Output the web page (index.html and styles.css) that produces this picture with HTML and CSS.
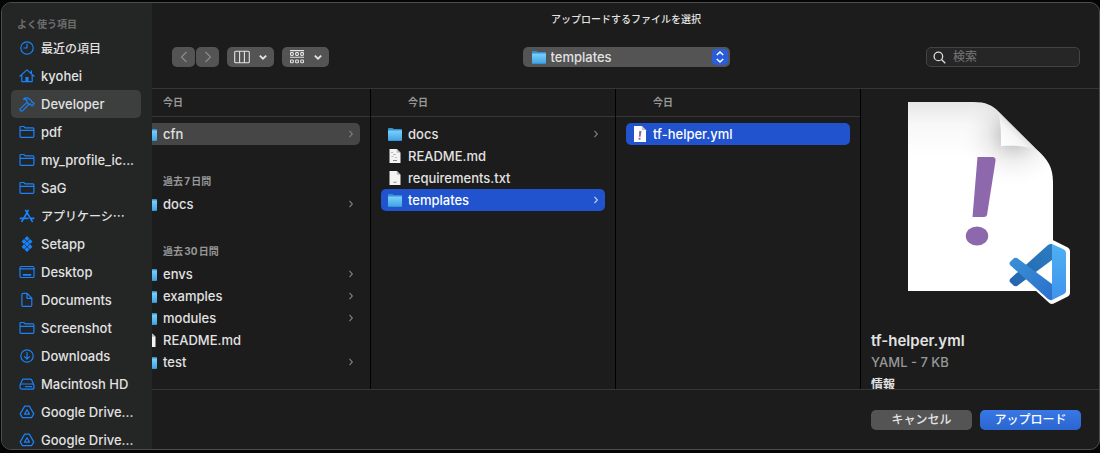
FILE: index.html
```html
<!DOCTYPE html>
<html lang="ja">
<head>
<meta charset="utf-8">
<meta name="viewport" content="width=device-width, initial-scale=1">
<title>アップロードするファイルを選択</title>
<link rel="stylesheet" href="styles.css">
</head>
<body>
<svg class="defs" width="0" height="0" aria-hidden="true">
  <defs>
    <linearGradient id="folderFill" x1="0" y1="0" x2="0" y2="1">
      <stop offset="0" stop-color="#7dcffb"/><stop offset="1" stop-color="#41a5e4"/>
    </linearGradient>
    <symbol id="i-clock" viewBox="0 0 16 16"><circle cx="8" cy="8" r="6.2"/><path d="M8 4.2V8H4.8"/></symbol>
    <symbol id="i-home" viewBox="0 0 16 16"><path d="M.9 8.2 8 1.9l7.1 6.3M2.8 6.8v6.8h10.4V6.8M12.4 5.4V2.8"/><path class="solid" d="M6.4 9h3.2v4.6H6.4z"/></symbol>
    <symbol id="i-hammer" viewBox="0 0 16 16"><path d="M1.3 12.6 8 6.4l1.9 2-6.4 6.4c-1.3 1-3.3-.9-2.2-2.2zM8 6.4c.5-1.500-.2-2.400-1.500-3-.8-.3-1.400-.3-2-.2C5.400 1.700 8.200 1.300 10 2.500l2.300 2.100c.4.4.3.9.5 1.300l.8.3 1.600 1.400-2.100 2.300-1.500-1.300-.2-.8-1.500.6z"/></symbol>
    <symbol id="i-folder" viewBox="0 0 16 16"><path d="M1 12.200V3.600c0-.7.4-1.100 1.100-1.100h2.700l1.300 1.300h7.700c.7 0 1.100.4 1.100 1.100v7.300c0 .7-.4 1.100-1.100 1.100H2.100c-.7 0-1.100-.4-1.100-1.100zM1 6.400h13.900"/></symbol>
    <symbol id="i-apps" viewBox="0 0 16 16"><path class="thick" d="M6.700 2.400 8 4.600l1.200-2.200M8.300 4.300 3.800 11.700M8 4.600l5.200 8.800M1.500 10.400h7.300M11.500 10.400h3.200M2.900 13.300l.5-.8"/></symbol>
    <symbol id="i-setapp" viewBox="0 0 16 16"><path class="solid" d="m8 0 2.500 2.500L8 5 5.500 2.500zM5 2.900l2.500 2.500L5 7.900 2.500 5.400zM11 2.900l2.500 2.500L11 7.900 8.500 5.400zM8 5.500 10.500 8 8 10.500 5.500 8zM5 8.200l2.500 2.500L5 13.200l-2.500-2.500zM11 8.200l2.500 2.500-2.500 2.500-2.500-2.500zM8 11l2.500 2.500L8 16l-2.500-2.500z"/></symbol>
    <symbol id="i-desktop" viewBox="0 0 16 16"><rect x="1" y="2.500" width="14" height="11" rx="1.300"/><path d="M1 4.800h14"/><path class="solid" d="M3.800 10h8.400v1.800H3.800z"/></symbol>
    <symbol id="i-doc" viewBox="0 0 16 16"><path d="M2.900 13.200V2.600c0-.8.4-1.200 1.200-1.200h4l4.700 4.800v7c0 .8-.4 1.200-1.200 1.200H4.100c-.8 0-1.200-.4-1.200-1.200zM8 1.600V6.300h4.600"/></symbol>
    <symbol id="i-down" viewBox="0 0 16 16"><circle cx="8" cy="8" r="6.200"/><path d="M8 4.600v6.400M5.500 8.700 8 11.200l2.500-2.500"/></symbol>
    <symbol id="i-disk" viewBox="0 0 16 16"><path d="m1.300 8.600 2-4.500c.3-.7.700-1 1.500-1h6.400c.8 0 1.200.3 1.500 1l2 4.500"/><rect x="1" y="8" width="14" height="5.200" rx="2"/><path d="M6.500 10.700h1M8.600 10.700h1M10.700 10.700h2"/></symbol>
    <symbol id="i-drive" viewBox="0 0 16 16"><path d="M5.700 2.100h4.600l4.500 7.800-2.200 3.700H3.400L1.200 9.900zM8 5.800l2.500 4.300h-5z"/></symbol>
    <symbol id="i-chev" viewBox="0 0 6 10"><path d="M1.500 1.800 4.300 5 1.500 8.200"/></symbol>
    <symbol id="i-caret" viewBox="0 0 10 10"><path d="M1.800 3.600 5 6.700l3.200-3.100"/></symbol>
    <symbol id="f-folder" viewBox="0 0 14 13"><path fill="#3291d0" d="M0 1.200C0 .4.300 0 1 0h3.600l1.200 1H13c.7 0 1 .3 1 1V12c0 .7-.3 1-1 1H1c-.7 0-1-.3-1-1z"/><path fill="url(#folderFill)" d="M0 2.500h14v9c0 .6-.3.800-.8.800H.8c-.5 0-.8-.2-.8-.8z"/></symbol>
    <symbol id="f-md" viewBox="0 0 14 14"><path fill="#f3f3f3" d="M1.500 0h7.300L12.500 3.800V14h-11z"/><path fill="#bcbcbc" d="M8.800 0v3.800h3.700zM3 3h2v1H3zM5 5h3v1H5zM3.500 7h2v1h-2zM7 8h2v1H7z"/><path fill="#888" d="M5 11h4v1H5z"/></symbol>
    <symbol id="f-txt" viewBox="0 0 14 14"><path fill="#f3f3f3" d="M1.500 0h7.300L12.500 3.800V14h-11z"/><path fill="#bcbcbc" d="M8.800 0v3.800h3.700z"/><path fill="#888" d="M5.500 10.800h3v1h-3z"/></symbol>
    <symbol id="f-yml" viewBox="0 0 14 16"><path fill="#fff" d="M1 0h7.800L13 4.200V16H1z"/><path fill="#c9c9c9" d="M8.800 0v4.200H13z"/><path fill="#8d68ad" d="M6.200 5h2.300l-.9 5.800H5.900zM5.600 11.800h1.900v2H5.600z"/></symbol>
  </defs>
</svg>

<div class="window">
  <nav class="sidebar" aria-label="よく使う項目">
    <h2 class="sidebar-title">よく使う項目</h2>
    <button class="place ja" type="button"><svg class="place-icon"><use href="#i-clock"/></svg><span>最近の項目</span></button>
    <button class="place" type="button"><svg class="place-icon"><use href="#i-home"/></svg><span>kyohei</span></button>
    <button class="place current" type="button"><svg class="place-icon"><use href="#i-hammer"/></svg><span>Developer</span></button>
    <button class="place" type="button"><svg class="place-icon"><use href="#i-folder"/></svg><span>pdf</span></button>
    <button class="place" type="button"><svg class="place-icon"><use href="#i-folder"/></svg><span>my_profile_ic...</span></button>
    <button class="place" type="button"><svg class="place-icon"><use href="#i-folder"/></svg><span>SaG</span></button>
    <button class="place ja" type="button"><svg class="place-icon"><use href="#i-apps"/></svg><span>アプリケーシ…</span></button>
    <button class="place" type="button"><svg class="place-icon"><use href="#i-setapp"/></svg><span>Setapp</span></button>
    <button class="place" type="button"><svg class="place-icon"><use href="#i-desktop"/></svg><span>Desktop</span></button>
    <button class="place" type="button"><svg class="place-icon"><use href="#i-doc"/></svg><span>Documents</span></button>
    <button class="place" type="button"><svg class="place-icon"><use href="#i-folder"/></svg><span>Screenshot</span></button>
    <button class="place" type="button"><svg class="place-icon"><use href="#i-down"/></svg><span>Downloads</span></button>
    <button class="place" type="button"><svg class="place-icon"><use href="#i-disk"/></svg><span>Macintosh HD</span></button>
    <button class="place" type="button"><svg class="place-icon"><use href="#i-drive"/></svg><span>Google Drive...</span></button>
    <button class="place" type="button"><svg class="place-icon"><use href="#i-drive"/></svg><span>Google Drive...</span></button>
  </nav>

  <main class="main">
    <header class="header">
      <h1 class="title">アップロードするファイルを選択</h1>
      <div class="toolbar">
        <div class="tools">
          <div class="history">
            <button class="tool nav" type="button" aria-label="戻る" disabled><svg class="arrow" viewBox="0 0 8 12"><path d="M6.500 1 1.500 6l5 5"/></svg></button>
            <button class="tool nav" type="button" aria-label="進む" disabled><svg class="arrow" viewBox="0 0 8 12"><path d="m1.500 1 5 5-5 5"/></svg></button>
          </div>
          <button class="tool view" type="button" aria-label="カラム表示"><svg class="view-icon" viewBox="0 0 16 14"><rect x=".7" y="1.200" width="14.600" height="11.600" rx="1"/><path d="M5.600 1.200v11.600M10.400 1.200v11.600"/></svg><svg class="caret"><use href="#i-caret"/></svg></button>
          <button class="tool view" type="button" aria-label="グループ"><svg class="view-icon" viewBox="0 0 16 14"><path d="M1 .6h14M1 7.300h14"/><rect x="1.500" y="2.600" width="2.800" height="2.800" rx=".8"/><rect x="6.600" y="2.600" width="2.800" height="2.800" rx=".8"/><rect x="11.700" y="2.600" width="2.800" height="2.800" rx=".8"/><rect x="1.500" y="10" width="2.800" height="2.800" rx=".8"/><rect x="6.600" y="10" width="2.800" height="2.800" rx=".8"/><rect x="11.700" y="10" width="2.800" height="2.800" rx=".8"/></svg><svg class="caret"><use href="#i-caret"/></svg></button>
        </div>
        <div class="location">
          <svg class="folder location-folder"><use href="#f-folder"/></svg>
          <select class="location-select" aria-label="場所"><option>templates</option></select>
          <svg class="stepper" viewBox="0 0 16 16"><path d="M4.800 6 8 3l3.200 3M4.800 10 8 13l3.200-3"/></svg>
        </div>
        <label class="search">
          <svg class="search-icon" viewBox="0 0 14 14"><circle cx="5.800" cy="5.800" r="4.600"/><path d="m9.200 9.200 4 4"/></svg>
          <input class="search-input" type="search" placeholder="検索" aria-label="検索">
        </label>
      </div>
    </header>

    <div class="browser">
      <section class="column first">
        <h2 class="group-head">今日</h2>
        <div class="rows">
          <button class="row open" type="button"><svg class="folder"><use href="#f-folder"/></svg><span class="name">cfn</span><svg class="chev"><use href="#i-chev"/></svg></button>
          <h3 class="group-title">過去7日間</h3>
          <button class="row" type="button"><svg class="folder"><use href="#f-folder"/></svg><span class="name">docs</span><svg class="chev"><use href="#i-chev"/></svg></button>
          <h3 class="group-title">過去30日間</h3>
          <button class="row" type="button"><svg class="folder"><use href="#f-folder"/></svg><span class="name">envs</span><svg class="chev"><use href="#i-chev"/></svg></button>
          <button class="row" type="button"><svg class="folder"><use href="#f-folder"/></svg><span class="name">examples</span><svg class="chev"><use href="#i-chev"/></svg></button>
          <button class="row" type="button"><svg class="folder"><use href="#f-folder"/></svg><span class="name">modules</span><svg class="chev"><use href="#i-chev"/></svg></button>
          <button class="row" type="button"><svg class="file"><use href="#f-md"/></svg><span class="name">README.md</span></button>
          <button class="row" type="button"><svg class="folder"><use href="#f-folder"/></svg><span class="name">test</span><svg class="chev"><use href="#i-chev"/></svg></button>
        </div>
      </section>
      <section class="column">
        <h2 class="group-head">今日</h2>
        <div class="rows">
          <button class="row" type="button"><svg class="folder"><use href="#f-folder"/></svg><span class="name">docs</span><svg class="chev"><use href="#i-chev"/></svg></button>
          <button class="row" type="button"><svg class="file"><use href="#f-md"/></svg><span class="name">README.md</span></button>
          <button class="row" type="button"><svg class="file"><use href="#f-txt"/></svg><span class="name">requirements.txt</span></button>
          <button class="row selected" type="button"><svg class="folder"><use href="#f-folder"/></svg><span class="name">templates</span><svg class="chev"><use href="#i-chev"/></svg></button>
        </div>
      </section>
      <section class="column">
        <h2 class="group-head">今日</h2>
        <div class="rows">
          <button class="row selected" type="button"><svg class="file tall"><use href="#f-yml"/></svg><span class="name">tf-helper.yml</span></button>
        </div>
      </section>
      <aside class="preview">
        <svg class="preview-art" viewBox="0 0 145 206" role="img" aria-label="YAML">
          <defs>
            <linearGradient id="paper" x1="0" y1="0" x2="0" y2="1"><stop offset="0" stop-color="#e6e6e6"/><stop offset=".12" stop-color="#f8f8f8"/><stop offset=".3" stop-color="#fff"/></linearGradient>
            <radialGradient id="shade" gradientUnits="userSpaceOnUse" cx="106" cy="32" r="56"><stop offset=".2" stop-color="#aaa" stop-opacity=".6"/><stop offset=".5" stop-color="#ccc" stop-opacity=".3"/><stop offset="1" stop-color="#fff" stop-opacity="0"/></radialGradient>
            <linearGradient id="curl" gradientUnits="userSpaceOnUse" x1="94" y1="44" x2="112" y2="26"><stop offset="0" stop-color="#fff"/><stop offset=".6" stop-color="#f6f6f6"/><stop offset="1" stop-color="#d8d8d8"/></linearGradient>
            <linearGradient id="armDark" x1="0" y1="1" x2="1" y2="0"><stop offset="0" stop-color="#2465ad"/><stop offset="1" stop-color="#2b7cc0"/></linearGradient>
            <linearGradient id="armMid" x1="0" y1="0" x2="1" y2="1"><stop offset="0" stop-color="#3a90d6"/><stop offset="1" stop-color="#2a70cc"/></linearGradient>
            <linearGradient id="blade" x1="0" y1="0" x2="0" y2="1"><stop offset="0" stop-color="#4eb0f3"/><stop offset="1" stop-color="#3f93ec"/></linearGradient>
          </defs>
          <path fill="url(#paper)" d="M0 0H65C78 0 84 3 91 10L128 47C140 57 145 66 145 80V189H0z"/>
          <path fill="url(#shade)" d="M0 0H65C78 0 84 3 91 10L128 47C140 57 145 66 145 80V189H0z"/>
          <path fill="url(#curl)" d="M88 8C93 15 93 28 93 44C108 43 121 44 131 50z"/>
          <path fill="#8d68ad" d="M69.500 55H85Q88 55.500 87.500 59L79 113Q78.500 115 76 115H64.500z"/>
          <ellipse fill="#8d68ad" cx="69" cy="134" rx="11.200" ry="9.600"/>
          <path fill="#fff" stroke="#fff" stroke-width="8" stroke-linejoin="round" d="M144 142 158 149V191L144 198 122 178 107 184 102 179 112 169 102 161 107 156 122 162z"/>
          <path fill="url(#armDark)" d="M102 177 140 143Q142 141.500 144 142V158L109 184Q107 185 105 183L102 180Q101 179 102 177z"/>
          <path fill="url(#armMid)" d="M102 163Q101 161 102 160L105 157Q107 155 109 156L144 182V198Q142 198.500 140 197z"/>
          <path fill="url(#blade)" d="M144 142 156 147.500Q158 148.500 158 151V189Q158 191 156 192L144 198z"/>
        </svg>
        <h2 class="preview-name">tf-helper.yml</h2>
        <p class="preview-kind">YAML - 7 KB</p>
        <h3 class="preview-info">情報</h3>
      </aside>
    </div>

    <footer class="footer">
      <button class="action" type="button">キャンセル</button>
      <button class="action primary" type="button">アップロード</button>
    </footer>
  </main>
</div>
</body>
</html>
```
FILE: styles.css
```css
* {
  box-sizing: border-box;
}

body {
  margin: 0;
  height: 100vh;
  padding: 2px 0 3px 1px;
  background: #050505;
  color: #e2e2e2;
  font: 500 13px/16px Inter, "Noto Sans CJK JP", sans-serif;
  overflow: hidden;
}

h1, h2, h3, p {
  margin: 0;
  font-weight: 500;
}

button, select, input {
  margin: 0;
  border: 0;
  color: inherit;
  font: inherit;
}

svg {
  display: block;
  flex: none;
  fill: none;
}

.defs {
  position: absolute;
}

.window {
  display: flex;
  height: 100%;
  border: 1px solid #4d4d4d;
  border-radius: 10px;
  background: #1c1c1c;
  overflow: hidden;
}

/* Sidebar */
.sidebar {
  flex: none;
  width: 150px;
  padding: 12px 11px 0 9px;
  background: #242525;
  overflow: hidden;
}

.sidebar-title {
  padding-left: 6px;
  color: #6d6d6d;
  font-size: 10px;
  font-weight: 700;
  line-height: 19px;
}

.place {
  display: flex;
  align-items: center;
  gap: 6px;
  width: 100%;
  height: 28px;
  padding: 0 0 0 8px;
  border-radius: 5px;
  background: none;
  white-space: nowrap;
}

.place.ja {
  font-family: "Noto Sans CJK JP", sans-serif;
  font-size: 12px;
  line-height: 18px;
}

.place.current {
  background: #3d3e3e;
}

.place-icon {
  width: 16px;
  height: 16px;
  stroke: #1a82fb;
  stroke-width: 1.2;
  stroke-linejoin: round;
  stroke-linecap: round;
}

.solid {
  fill: #1a82fb;
  stroke: none;
}

.thick {
  stroke-width: 1.7;
}

/* Header */
.main {
  display: flex;
  flex: 1;
  flex-direction: column;
  min-width: 0;
}

.header {
  padding: 8px 19px 21px 20px;
  border-bottom: 1px solid #363636;
}

.title {
  font-size: 10px;
  line-height: 16px;
  text-align: center;
}

.toolbar {
  display: grid;
  grid-template-columns: 1fr 207px 1fr;
  align-items: center;
  padding-top: 20px;
}

.tools, .history {
  display: flex;
  gap: 8px;
}

.history {
  gap: 1px;
}

.tool {
  display: flex;
  align-items: center;
  justify-content: center;
  height: 20px;
  padding: 0;
  border-radius: 5px;
  background: #545454;
}

.nav {
  width: 23px;
}

.view {
  gap: 8px;
  width: 47px;
}

.arrow {
  width: 8px;
  height: 12px;
  stroke: #8a8a8a;
  stroke-width: 1.2;
}

.view-icon {
  width: 16px;
  height: 14px;
  stroke: #e4e4e4;
  stroke-width: 1.1;
}

.caret {
  width: 10px;
  height: 10px;
  stroke: #e4e4e4;
  stroke-width: 1.8;
}

.location {
  position: relative;
}

.location-select {
  display: block;
  width: 100%;
  height: 20px;
  padding: 0 24px 0 28px;
  border-radius: 5px;
  background: #545454;
  appearance: none;
}

.location-folder {
  position: absolute;
  top: 4px;
  left: 9px;
}

.stepper {
  position: absolute;
  top: 2px;
  right: 2px;
  width: 16px;
  height: 16px;
  border-radius: 4px;
  background: #285ddb;
  stroke: #fff;
  stroke-width: 1.6;
  pointer-events: none;
}

.search {
  display: flex;
  align-items: center;
  justify-self: end;
  gap: 7px;
  width: 154px;
  height: 20px;
  padding: 0 6px;
  border: 1px solid #434343;
  border-radius: 5px;
  background: #262626;
}

.search-icon {
  width: 13px;
  height: 13px;
  stroke: #dcdcdc;
  stroke-width: 1.4;
}

.search-input {
  flex: 1;
  min-width: 0;
  padding: 0;
  background: none;
  font-size: 12px;
  outline: none;
}

.search-input::placeholder {
  color: #6c6c6c;
}

/* Column browser */
.browser {
  display: flex;
  flex: 1;
  min-height: 0;
  overflow: hidden;
}

.column {
  flex: none;
  width: 245px;
  border-right: 1px solid #000;
}

.column.first {
  margin-left: -26px;
}

.group-head, .group-title {
  padding-left: 37px;
  color: #979797;
  font-size: 10px;
  font-weight: 700;
  text-autospace: normal;
}

.group-head {
  border-bottom: 1px solid #363636;
  line-height: 27px;
}

.group-title {
  padding: 25px 0 0 27px;
  line-height: 23px;
}

.rows {
  padding: 6px 10px 0;
}

.row {
  display: flex;
  align-items: center;
  gap: 6px;
  width: 100%;
  height: 22px;
  padding: 0 6px 0 7px;
  border-radius: 5px;
  background: none;
  text-align: left;
}

.row.open {
  background: #464646;
}

.row.selected {
  background: #2153ce;
  color: #fff;
}

.folder {
  width: 14px;
  height: 13px;
}

.file {
  width: 14px;
  height: 14px;
}

.file.tall {
  height: 16px;
}

.name {
  flex: 1;
}

.chev {
  width: 6px;
  height: 10px;
  stroke: #7c7c7c;
  stroke-width: 1.2;
}

.selected .chev {
  stroke: #c4d2f4;
}

/* Preview */
.preview {
  flex: 1;
  min-width: 0;
  padding: 13px 10px 0;
}

.preview-art {
  width: 145px;
  height: 206px;
  margin: 0 auto 22px;
  overflow: visible;
}

.preview-name {
  font-size: 15px;
  font-weight: 600;
  line-height: 22px;
}

.preview-kind {
  color: #989898;
  line-height: 20px;
}

.preview-info {
  padding-top: 3px;
  font-size: 12px;
  font-weight: 700;
  line-height: 20px;
}

/* Footer */
.footer {
  display: flex;
  justify-content: flex-end;
  gap: 8px;
  padding: 20px 18px 19px;
  border-top: 1px solid #363636;
}

.action {
  width: 101px;
  height: 20px;
  padding: 0;
  border-radius: 5px;
  background: #545454;
  font-size: 12px;
}

.action.primary {
  background: linear-gradient(#3877e6, #2b66cf);
  color: #fff;
}
```
